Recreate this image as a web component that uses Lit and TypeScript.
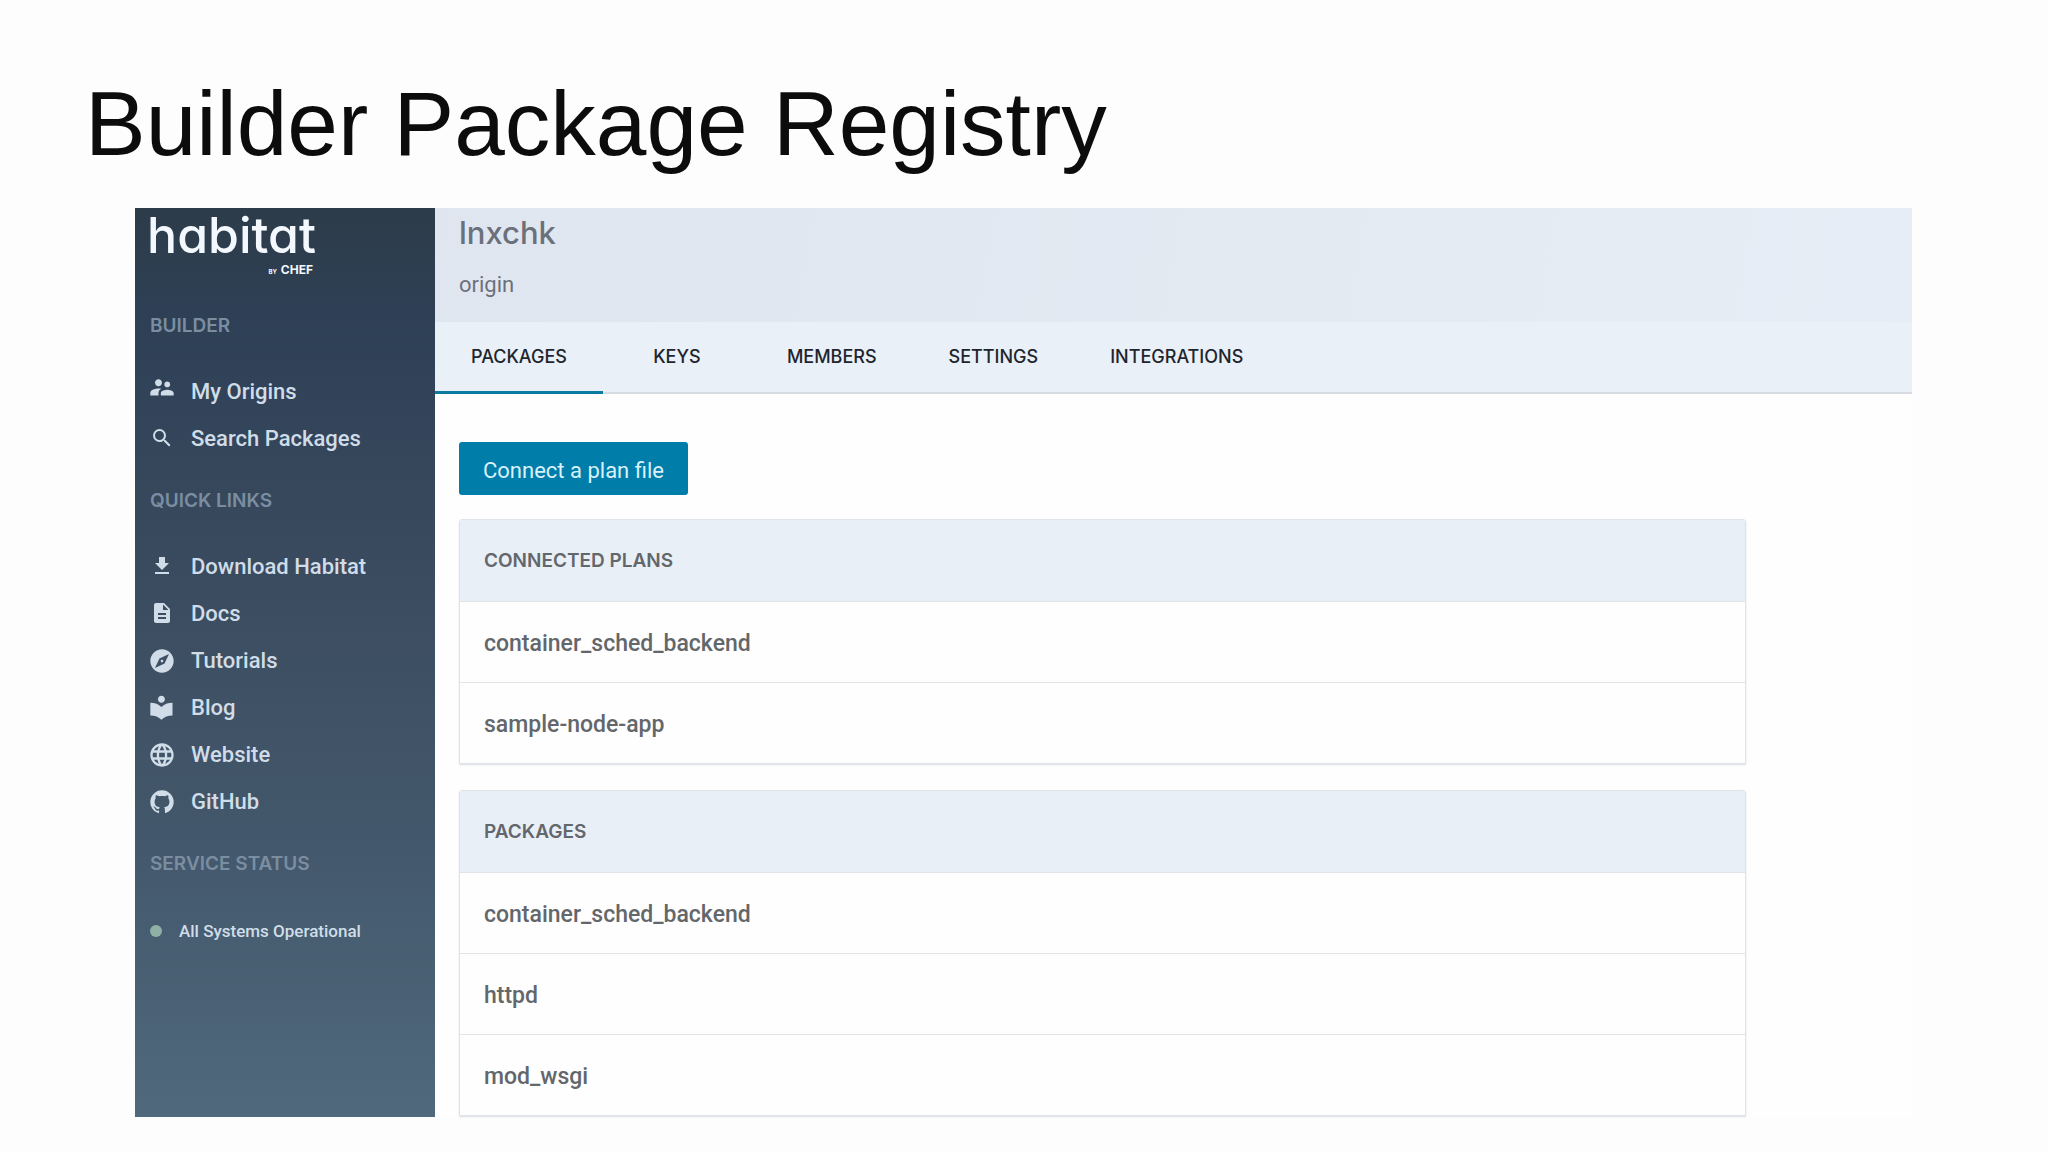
import { LitElement, html, css, svg } from "lit";
import { customElement, property } from "lit/decorators.js";
import { classMap } from "lit/directives/class-map.js";

interface NavItem {
  label: string;
  icon: string;
}

const icons: Record<string, { large: boolean; shape: unknown }> = {
  people: {
    large: true,
    shape: svg`<path d="M16.5 8c1.38 0 2.49-1.12 2.49-2.5S17.88 3 16.5 3C15.12 3 14 4.12 14 5.5S15.12 8 16.5 8zM9 7c1.66 0 2.99-1.34 2.99-3S10.66 1 9 1C7.34 1 6 2.34 6 4s1.34 3 3 3zm7.500 3c-1.830 0-5.500.920-5.500 2.750V15h11v-2.250c0-1.830-3.670-2.750-5.500-2.750zM9 9c-2.330 0-7 1.170-7 3.500V15h7v-2.250c0-.850.330-2.340 2.370-3.470C10.500 9.100 9.660 9 9 9z"/>`,
  },
  search: {
    large: false,
    shape: svg`<path d="M15.500 13h-.790l-.280-.270A6.471 6.471 0 0 0 16 8.500 6.500 6.500 0 1 0 9.500 15c1.610 0 3.090-.590 4.230-1.570l.270.280v.790l5 4.990L20.490 18l-4.990-5zm-6 0C7.010 13 5 10.990 5 8.500S7.010 4 9.500 4 14 6.010 14 8.500 11.990 13 9.500 13z"/>`,
  },
  download: { large: false, shape: svg`<path d="M19 8h-4V2H9v6H5l7 7 7-7zM5 17v2h14v-2H5z"/>` },
  docs: {
    large: false,
    shape: svg`<path d="M14 1H6c-1.100 0-1.990.900-1.990 2L4 19c0 1.100.890 2 1.990 2H18c1.100 0 2-.900 2-2V7l-6-6zm2 16H8v-2h8v2zm0-4H8v-2h8v2zm-3-5V2.500L18.500 8H13z"/>`,
  },
  compass: {
    large: true,
    shape: svg`<path d="M12 10.900c-.610 0-1.100.490-1.100 1.100s.490 1.100 1.100 1.100c.610 0 1.100-.490 1.100-1.100s-.490-1.100-1.100-1.100zM12 2C6.480 2 2 6.480 2 12s4.480 10 10 10 10-4.480 10-10S17.520 2 12 2zm2.190 12.190L6 18l3.810-8.190L18 6l-3.810 8.190z"/>`,
  },
  reader: {
    large: true,
    shape: svg`<path d="M11.500 11.050C9.140 8.850 5.980 7.500 2 7.500v11c3.980 0 7.140 1.350 9.500 3.550 2.360-2.190 5.520-3.550 9.500-3.550v-11c-3.980 0-7.140 1.350-9.500 3.550zM11.500 7.500c1.660 0 3-1.340 3-3s-1.340-3-3-3-3 1.340-3 3 1.340 3 3 3z"/>`,
  },
  globe: {
    large: true,
    shape: svg`<path d="M11.990 2C6.470 2 2 6.480 2 12s4.470 10 9.990 10C17.520 22 22 17.520 22 12S17.520 2 11.990 2zm6.930 6h-2.950a15.650 15.650 0 0 0-1.380-3.560A8.030 8.030 0 0 1 18.920 8zM12 4.040c.830 1.200 1.480 2.530 1.910 3.960h-3.820c.430-1.430 1.080-2.760 1.910-3.960zM4.260 14C4.100 13.360 4 12.690 4 12s.100-1.360.260-2h3.380c-.080.660-.140 1.320-.140 2 0 .680.060 1.340.140 2H4.260zm.820 2h2.950c.320 1.250.780 2.450 1.380 3.560A7.987 7.987 0 0 1 5.080 16zm2.950-8H5.080a7.987 7.987 0 0 1 4.330-3.560A15.650 15.650 0 0 0 8.030 8zM12 19.960c-.830-1.200-1.480-2.530-1.910-3.960h3.820c-.430 1.430-1.080 2.760-1.910 3.960zM14.340 14H9.660c-.090-.660-.160-1.320-.160-2 0-.680.070-1.350.160-2h4.680c.090.650.160 1.320.160 2 0 .680-.070 1.340-.160 2zm.250 5.560c.600-1.110 1.060-2.310 1.380-3.560h2.950a8.030 8.030 0 0 1-4.330 3.560zM16.360 14c.080-.660.140-1.320.140-2 0-.680-.060-1.340-.140-2h3.380c.160.640.260 1.310.260 2s-.100 1.360-.260 2h-3.380z"/>`,
  },
  github: {
    large: true,
    shape: svg`<path d="M12 2A10 10 0 0 0 2 12c0 4.420 2.870 8.170 6.840 9.500.500.080.660-.230.660-.500v-1.690c-2.770.600-3.360-1.340-3.360-1.340-.460-1.160-1.110-1.470-1.110-1.470-.910-.620.070-.600.070-.600 1 .070 1.530 1.030 1.530 1.030.870 1.520 2.340 1.070 2.910.830.090-.650.350-1.090.630-1.340-2.220-.250-4.550-1.110-4.550-4.920 0-1.110.380-2 1.030-2.710-.100-.250-.450-1.290.100-2.640 0 0 .840-.270 2.750 1.020.790-.220 1.650-.330 2.500-.330.850 0 1.710.110 2.500.330 1.910-1.290 2.750-1.020 2.750-1.020.550 1.350.200 2.390.100 2.640.650.710 1.030 1.600 1.030 2.710 0 3.820-2.340 4.660-4.570 4.910.360.310.690.920.690 1.850V21c0 .270.160.590.670.500C19.140 20.160 22 16.420 22 12A10 10 0 0 0 12 2z"/>`,
  },
};

const builderLinks: NavItem[] = [
  { label: "My Origins", icon: "people" },
  { label: "Search Packages", icon: "search" },
];

const quickLinks: NavItem[] = [
  { label: "Download Habitat", icon: "download" },
  { label: "Docs", icon: "docs" },
  { label: "Tutorials", icon: "compass" },
  { label: "Blog", icon: "reader" },
  { label: "Website", icon: "globe" },
  { label: "GitHub", icon: "github" },
];

const tabs = ["Packages", "Keys", "Members", "Settings", "Integrations"];

@customElement("side-nav")
export class SideNav extends LitElement {
  static styles = css`
    :host {
      display: block;
      padding: 0 15px;
      color: #d0dde8;
      background: linear-gradient(#2d3c49, #2e4056 12%, #3b4c60 42%, #44596d 72%, #50697c);
      font-family: Roboto, "Liberation Sans", sans-serif;
    }
    .brand {
      display: flex;
      flex-direction: column;
      align-items: flex-end;
      width: 166px;
      height: 106px;
      color: #f2f8fd;
      text-decoration: none;
    }
    .wordmark {
      font: 500 50px/54px Inter, "Liberation Sans", sans-serif;
      font-feature-settings: "cv11";
    }
    .byline {
      display: flex;
      align-items: baseline;
      gap: 4px;
      padding-right: 3px;
      font: 700 12px/16px Inter, sans-serif;
    }
    .by {
      font-size: 6px;
    }
    .heading {
      margin: 0 0 30px;
      font: 600 19px/24px Inter, sans-serif;
      color: #7b8ea1;
    }
    .links {
      margin: 0 0 27px;
      padding: 0;
      list-style: none;
    }
    .link {
      display: flex;
      align-items: center;
      gap: 17px;
      height: 47px;
      color: inherit;
      font-size: 22px;
      font-weight: 500;
      text-decoration: none;
    }
    .slot {
      display: flex;
      justify-content: center;
      width: 24px;
    }
    .icon {
      flex: none;
      width: 24px;
      height: 24px;
      fill: currentColor;
    }
    .large {
      width: 28px;
      height: 28px;
    }
    .status {
      display: flex;
      align-items: center;
      gap: 17px;
      height: 49px;
      color: inherit;
      font-size: 17px;
      font-weight: 500;
      text-decoration: none;
    }
    .dot {
      width: 12px;
      height: 12px;
      border-radius: 50%;
      background: #8fb0a4;
    }
  `;

  private renderLinks(items: NavItem[]) {
    return html`<ul class="links">
      ${items.map(
        ({ label, icon }) => html`<li>
          <a class="link" href="#">
            <span class="slot">
              <svg
                class=${classMap({ icon: true, large: icons[icon].large })}
                viewBox="0 0 24 24"
                aria-hidden="true"
              >
                ${icons[icon].shape}
              </svg>
            </span>
            ${label}
          </a>
        </li>`
      )}
    </ul>`;
  }

  render() {
    return html`
      <a class="brand" href="#">
        <span class="wordmark">habitat</span>
        <span class="byline"><span class="by">BY</span>CHEF</span>
      </a>
      <nav>
        <h2 class="heading">BUILDER</h2>
        ${this.renderLinks(builderLinks)}
        <h2 class="heading">QUICK LINKS</h2>
        ${this.renderLinks(quickLinks)}
        <h2 class="heading">SERVICE STATUS</h2>
        <a class="status" href="#"><span class="dot"></span>All Systems Operational</a>
      </nav>
    `;
  }
}

@customElement("package-list")
export class PackageList extends LitElement {
  @property() heading = "";
  @property({ attribute: false }) items: string[] = [];

  static styles = css`
    :host {
      display: block;
      border: 1px solid #dfe3e9;
      border-radius: 3px 3px 0 0;
      box-shadow: 0 1px 2px #d9dfe5;
      color: #63676b;
    }
    .title {
      margin: 0;
      padding: 0 24px;
      background: #e9eff7;
      font: 600 19px/81px Inter, sans-serif;
    }
    .items {
      margin: 0;
      padding: 0;
      list-style: none;
    }
    .item {
      display: block;
      padding: 4px 24px 0;
      border-top: 1px solid #e1e3e9;
      color: inherit;
      font: 500 23px/76px Roboto, "Liberation Sans", sans-serif;
      text-decoration: none;
    }
  `;

  render() {
    return html`
      <h2 class="title">${this.heading}</h2>
      <ul class="items">
        ${this.items.map((name) => html`<li><a class="item" href="#">${name}</a></li>`)}
      </ul>
    `;
  }
}

@customElement("app-root")
export class AppRoot extends LitElement {
  static styles = css`
    :host {
      display: block;
      box-sizing: border-box;
      min-height: 100vh;
      padding: 72px 136px 34px 135px;
      background: #fdfdfd;
      font-family: Roboto, "Liberation Sans", sans-serif;
    }
    .slide-title {
      margin: 0 0 32px -50px;
      color: #0c0c0c;
      font: 400 91px/104px "Liberation Sans", Arial, sans-serif;
    }
    .frame {
      display: grid;
      grid-template-columns: 300px minmax(0, 1fr);
      background: #fefefe;
    }
    .origin {
      height: 114px;
      box-sizing: border-box;
      padding: 5px 24px 0;
      background: linear-gradient(100deg, #e0e6f0, #e4ebf3 70%, #e7edf6);
      color: #6b717c;
    }
    .name {
      margin: 0;
      font: 500 31px/40px Inter, sans-serif;
    }
    .kind {
      margin: 12px 0 0;
      font-size: 22px;
      line-height: 40px;
    }
    .tabs {
      display: flex;
      height: 72px;
      box-sizing: border-box;
      border-bottom: 2px solid #d5dbe1;
      background: #e9f0f8;
    }
    .tab {
      min-width: 148px;
      height: 72px;
      padding: 0 36px;
      border: 0;
      border-bottom: 3px solid transparent;
      background: none;
      color: #1e252d;
      font: 500 18px/24px Inter, sans-serif;
      text-transform: uppercase;
    }
    .active {
      border-bottom-color: #0b7c9f;
    }
    .content {
      display: flex;
      flex-direction: column;
      align-items: stretch;
      gap: 24px;
      padding: 48px 166px 1px 24px;
    }
    .connect {
      align-self: flex-start;
      height: 53px;
      padding: 4px 24px 0;
      border: 0;
      border-radius: 3px;
      background: #007ea9;
      color: #d8f1fb;
      font: 400 22px/48px Roboto, "Liberation Sans", sans-serif;
    }
    .lists {
      display: flex;
      flex-direction: column;
      gap: 26px;
    }
  `;

  render() {
    return html`
      <h1 class="slide-title">Builder Package Registry</h1>
      <div class="frame">
        <side-nav></side-nav>
        <main>
          <header class="origin">
            <h2 class="name">lnxchk</h2>
            <p class="kind">origin</p>
          </header>
          <div class="tabs" role="tablist">
            ${tabs.map(
              (label, i) => html`<button
                class=${classMap({ tab: true, active: i === 0 })}
                role="tab"
                aria-selected=${i === 0}
              >
                ${label}
              </button>`
            )}
          </div>
          <div class="content">
            <button class="connect">Connect a plan file</button>
            <div class="lists">
              <package-list
                .heading=${"CONNECTED PLANS"}
                .items=${["container_sched_backend", "sample-node-app"]}
              ></package-list>
              <package-list
                .heading=${"PACKAGES"}
                .items=${["container_sched_backend", "httpd", "mod_wsgi"]}
              ></package-list>
            </div>
          </div>
        </main>
      </div>
    `;
  }
}
